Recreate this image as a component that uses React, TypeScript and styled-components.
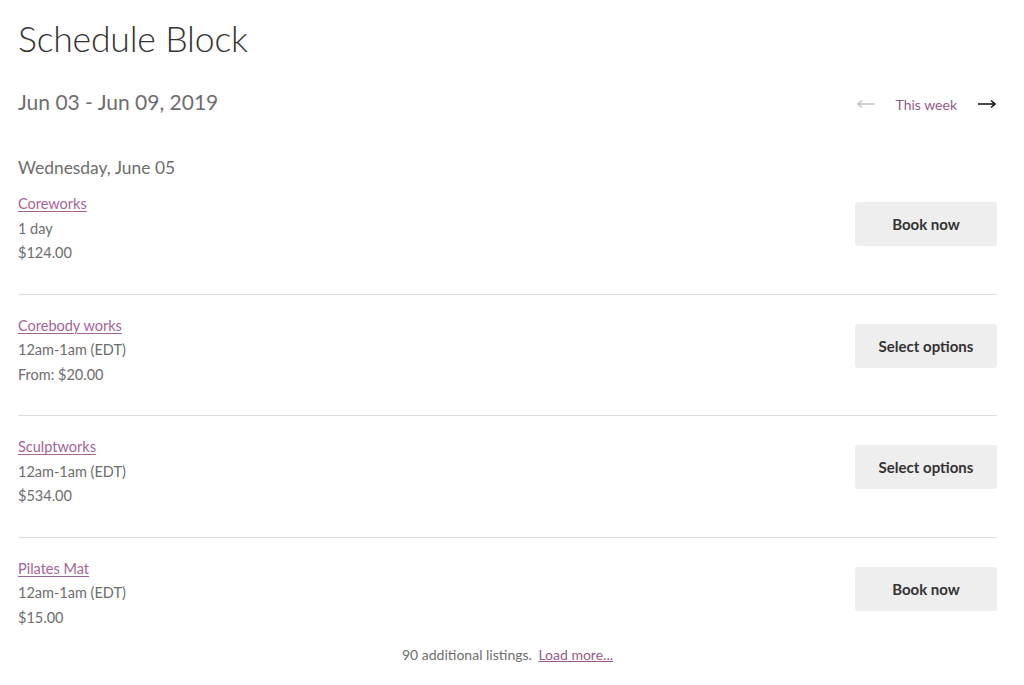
import React from "react";
import styled, { createGlobalStyle } from "styled-components";

type Listing = {
  name: string;
  when: string;
  price: string;
  action: string;
};

const listings: Listing[] = [
  { name: "Coreworks", when: "1 day", price: "$124.00", action: "Book now" },
  { name: "Corebody works", when: "12am-1am (EDT)", price: "From: $20.00", action: "Select options" },
  { name: "Sculptworks", when: "12am-1am (EDT)", price: "$534.00", action: "Select options" },
  { name: "Pilates Mat", when: "12am-1am (EDT)", price: "$15.00", action: "Book now" },
];

const GlobalStyle = createGlobalStyle`
  html, body {
    margin: 0;
    background: #fff;
  }
  body {
    font-family: Lato, "Open Sans", "Liberation Sans", sans-serif;
    color: #6d6d6d;
  }
`;

const Page = styled.main`
  padding: 13px 27px 0 18px;
`;

const Title = styled.h1`
  margin: 0;
  font-size: 35.6px;
  line-height: 52px;
  font-weight: 300;
  color: #333;
  letter-spacing: -0.2px;
`;

const WeekBar = styled.div`
  display: flex;
  align-items: center;
  justify-content: space-between;
  margin-top: 22px;
`;

const WeekRange = styled.h2`
  margin: 0;
  font-size: 21px;
  line-height: 30px;
  font-weight: 400;
  color: #6d6d6d;
`;

const WeekNav = styled.nav`
  display: flex;
  align-items: center;
  gap: 20px;
  padding-top: 4px;
`;

const NavArrow = styled.span<{ $active?: boolean }>`
  display: flex;
  color: ${({ $active }) => ($active ? "#111" : "#c4c4c4")};
`;

const ThisWeek = styled.a`
  font-size: 14px;
  color: #96588a;
  text-decoration: none;
`;

const DayHeading = styled.h3`
  margin: 39px 0 12px;
  font-size: 17.4px;
  line-height: 24px;
  font-weight: 400;
  color: #6d6d6d;
`;

const List = styled.ul`
  list-style: none;
  margin: 0;
  padding: 0;
`;

const Row = styled.li<{ $first?: boolean }>`
  display: flex;
  justify-content: space-between;
  align-items: flex-start;
  padding: ${({ $first }) => ($first ? "0" : "19px")} 0 28px;
  border-bottom: 1px solid #dcdcdc;
  &:last-child {
    border-bottom: none;
    padding-bottom: 16px;
  }
`;

const Details = styled.div`
  display: flex;
  flex-direction: column;
  font-size: 14.5px;
  line-height: 24.5px;
`;

const ListingLink = styled.a`
  color: #a46497;
  text-decoration: underline;
  text-underline-offset: 2px;
  text-decoration-thickness: 1px;
  align-self: flex-start;
`;

const ActionButton = styled.button`
  margin-top: 10px;
  width: 142px;
  height: 44px;
  border: none;
  border-radius: 3px;
  background: #eeeeee;
  color: #333;
  font-family: inherit;
  font-size: 15px;
  font-weight: 700;
  cursor: pointer;
`;

const Footer = styled.p`
  margin: 0;
  text-align: center;
  font-size: 14px;
  color: #6d6d6d;
`;

const LoadMore = styled.a`
  color: #96588a;
  text-decoration: underline;
  margin-left: 3px;
`;

const Arrow = () => (
  <svg width="20" height="10" viewBox="0 0 20 10" fill="none" stroke="currentColor">
    <path d="M1 5h17M14 1.5 18 5l-4 3.5" strokeWidth="1.6" />
  </svg>
);

export default function App() {
  return (
    <>
      <GlobalStyle />
      <Page>
        <Title>Schedule Block</Title>
        <WeekBar>
          <WeekRange>Jun 03 - Jun 09, 2019</WeekRange>
          <WeekNav>
            <NavArrow style={{ transform: "scaleX(-1)" }}>
              <Arrow />
            </NavArrow>
            <ThisWeek href="#">This week</ThisWeek>
            <NavArrow $active>
              <Arrow />
            </NavArrow>
          </WeekNav>
        </WeekBar>
        <DayHeading>Wednesday, June 05</DayHeading>
        <List>
          {listings.map((l, i) => (
            <Row key={l.name} $first={i === 0}>
              <Details>
                <ListingLink href="#">{l.name}</ListingLink>
                <span>{l.when}</span>
                <span>{l.price}</span>
              </Details>
              <ActionButton>{l.action}</ActionButton>
            </Row>
          ))}
        </List>
        <Footer>
          90 additional listings. <LoadMore href="#">Load more...</LoadMore>
        </Footer>
      </Page>
    </>
  );
}
